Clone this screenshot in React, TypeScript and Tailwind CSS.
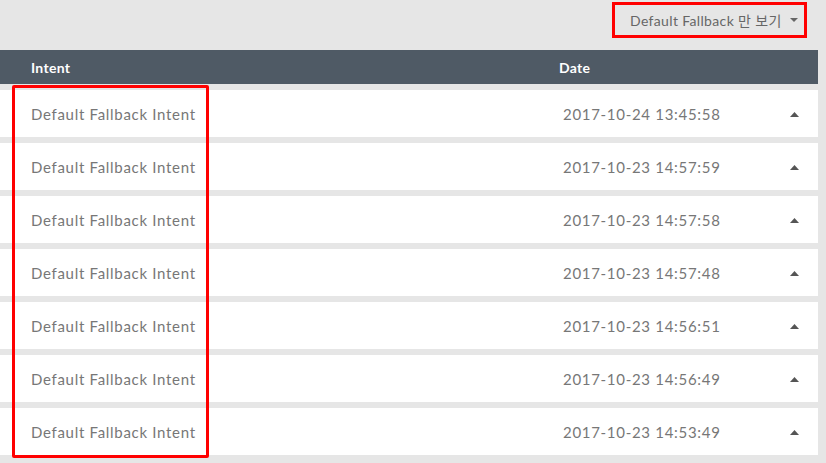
import React from 'react';

const rows = [
  '2017-10-24 13:45:58',
  '2017-10-23 14:57:59',
  '2017-10-23 14:57:58',
  '2017-10-23 14:57:48',
  '2017-10-23 14:56:51',
  '2017-10-23 14:56:49',
  '2017-10-23 14:53:49',
];

function CaretUp() {
  return (
    <svg width="9" height="5" viewBox="0 0 9 5" className="fill-[#555]">
      <path d="M0 5 L4.5 0 L9 5 Z" />
    </svg>
  );
}

function CaretDown() {
  return (
    <svg width="8" height="4" viewBox="0 0 8 4" className="shrink-0 fill-[#666]">
      <path d="M0 0 L8 0 L4 4 Z" />
    </svg>
  );
}

export default function App() {
  return (
    <div className="relative h-[463px] w-[826px] overflow-hidden bg-[#e6e6e6] font-['Lato','Noto_Sans_CJK_KR',sans-serif]">
      <div className="flex h-[50px] justify-end pr-[19px] pt-[2px]">
        <button className="flex h-[36px] w-[195px] items-center gap-[8px] border-[3px] border-[#ff0000] pl-[15px] text-[14px] tracking-[0.35px] text-[#666]">
          <span className="whitespace-nowrap">Default Fallback 만 보기</span>
          <CaretDown />
        </button>
      </div>

      <div className="mr-[8px] flex h-[34px] items-center bg-[#4f5a65] text-[14px] font-bold tracking-[0.3px] text-white">
        <div className="w-[559px] pl-[31px]">Intent</div>
        <div>Date</div>
      </div>

      <div className="mr-[8px] mt-[6px] flex flex-col gap-[6px]">
        {rows.map((d, i) => (
          <div key={i} className="flex h-[47px] items-center bg-white pt-[1px] text-[15px] tracking-[0.7px] text-[#777]">
            <div className="w-[563px] pl-[31px]">Default Fallback Intent</div>
            <div className="flex-1">{d}</div>
            <div className="pr-[19px]">
              <CaretUp />
            </div>
          </div>
        ))}
      </div>

      <div className="pointer-events-none absolute left-[12px] top-[85px] h-[373px] w-[197px] rounded-[2px] border-[3px] border-[#ff0000]" />
    </div>
  );
}
